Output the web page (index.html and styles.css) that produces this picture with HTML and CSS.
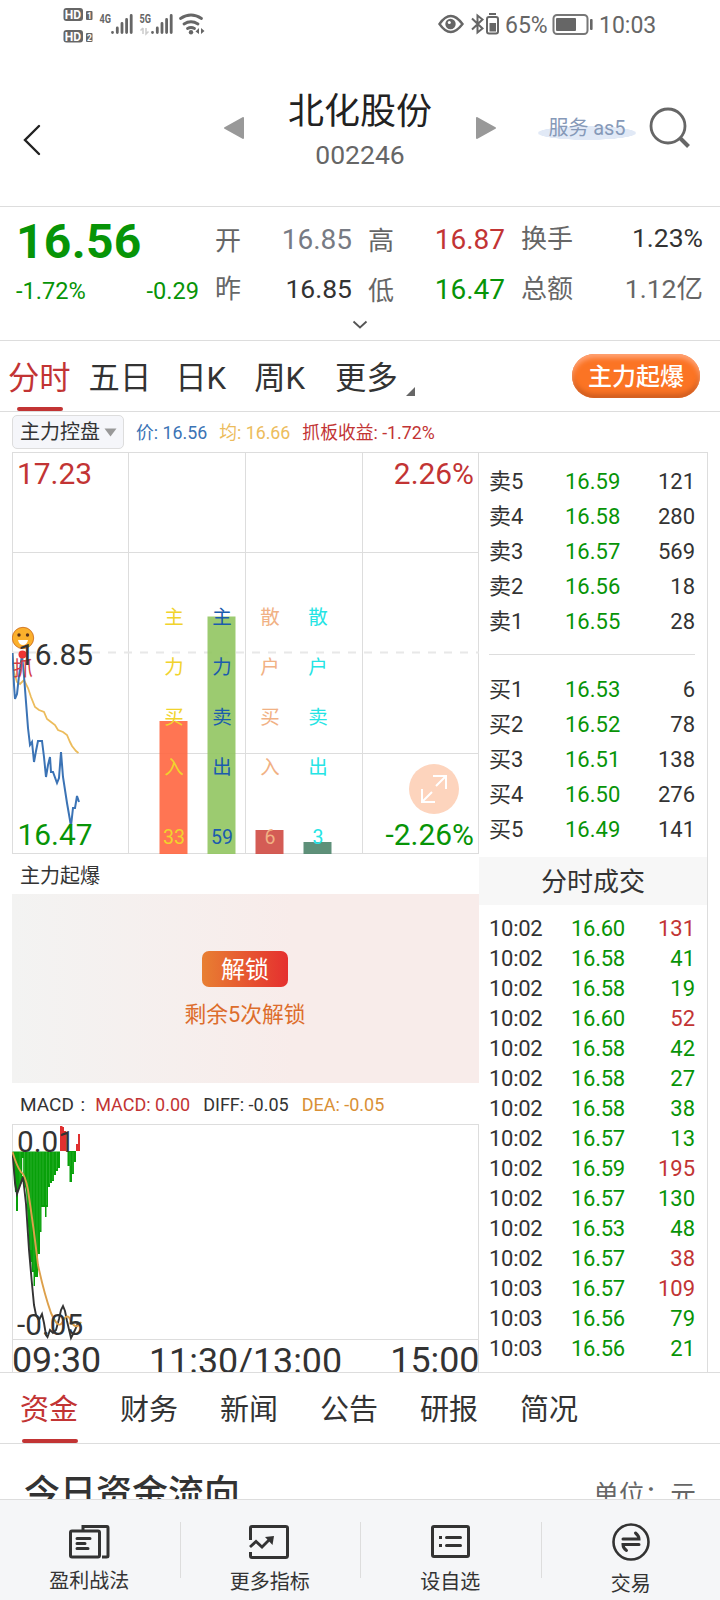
FILE: index.html
```html
<!DOCTYPE html>
<html lang="zh-CN">
<head>
<meta charset="utf-8">
<title>北化股份 002246</title>
<link rel="stylesheet" href="styles.css">
</head>
<body>
<div class="app">
  <div class="status">
    <svg class="signals" width="150" height="48" viewBox="0 0 150 48">
      <g fill="#666">
        <rect x="3.500" y="8" width="19.500" height="13" rx="3"/><rect x="26" y="11" width="6.500" height="9" rx="1"/>
        <rect x="3.500" y="30" width="19.500" height="12.500" rx="3"/><rect x="26" y="33" width="6.500" height="9" rx="1"/>
      </g>
      <g class="hd"><text x="4.800" y="18.800">HD</text><text x="4.800" y="40.500">HD</text></g>
      <g class="hd-n"><text x="27" y="18.600">1</text><text x="27" y="40.600">2</text></g>
      <g class="gen"><text x="39.500" y="23" textLength="11.500" lengthAdjust="spacingAndGlyphs">4G</text><text x="79.500" y="23" textLength="11.500" lengthAdjust="spacingAndGlyphs">5G</text></g>
      <g stroke="#666" stroke-width="2.800" stroke-linecap="round" fill="none">
        <path d="M52.500 32.500V32.300M57.300 32.500V28M62 32.500V23.500M66.600 32.500V19.500M71.200 32.500V15.500"/>
        <path d="M92.500 32.500V32.300M97.300 32.500V28M102 32.500V23.500M106.600 32.500V19.500M111.200 32.500V15.500"/>
        <path d="M120.500 18.500Q131 11.500 141.500 18.500M124 24Q131 19.500 138 24M127.500 28.500Q131 26.500 134.500 28.500"/>
      </g>
      <circle cx="131" cy="32.300" r="2.200" fill="#666"/>
      <path d="M139 28v6l-3.500-2.500zM141 28v6l3.500-3z" fill="#666"/>
      <path d="M83 28v6M80.500 30.500l2.500-2.500M86 28v6l2.500-2.500" stroke="#ccc" stroke-width="1.500" fill="none"/>
    </svg>
    <svg class="status-icons" width="64" height="48" viewBox="0 0 64 48">
      <g fill="none" stroke="#666" stroke-width="2">
        <path d="M1.500 24Q12.500 8 24.500 24Q12.500 40 1.500 24Z" stroke-width="2.400"/>
        <path d="M34 18.500l10.500 10L39.500 32.500V15.500L44.500 19.500L34 29.500"/>
        <rect x="49" y="17" width="11" height="16.500" rx="2"/>
      </g>
      <circle cx="12.500" cy="24" r="5.200" fill="#666"/><circle cx="11.300" cy="22.600" r="1.500" fill="#fff"/>
      <path d="M51 13h7v2h-7zM51.500 23h6.500v8.500h-6.500z" fill="#666"/>
    </svg>
    <span class="pct">65%</span>
    <svg class="battery" width="42" height="48" viewBox="0 0 42 48">
      <rect x="1.500" y="15" width="34" height="19" rx="3.500" fill="none" stroke="#777" stroke-width="2"/>
      <rect x="4" y="18" width="20" height="13" rx="1" fill="#666"/><rect x="38" y="19" width="2.600" height="11" rx="1" fill="#666"/>
    </svg>
    <span class="clock">10:03</span>
  </div>

  <header class="head">
    <svg class="back" width="20" height="34" viewBox="0 0 20 34"><path d="M17 3L3 17L17 31" fill="none" stroke="#222" stroke-width="2.400" stroke-linecap="round"/></svg>
    <svg class="prev" width="20" height="22" viewBox="0 0 20 22"><path d="M1 11L19 1V21Z" fill="#999" stroke="#999" stroke-linejoin="round" stroke-width="2"/></svg>
    <div class="name"><h1>北化股份</h1><span>002246</span></div>
    <svg class="next" width="20" height="22" viewBox="0 0 20 22"><path d="M19 11L1 1V21Z" fill="#999" stroke="#999" stroke-linejoin="round" stroke-width="2"/></svg>
    <div class="service">服务 as5</div>
    <svg class="search" width="44" height="44" viewBox="0 0 44 44"><circle cx="20" cy="20" r="17" fill="none" stroke="#666" stroke-width="2.800"/><path d="M32 32L40.500 40.500" stroke="#666" stroke-width="4"/></svg>
  </header>

  <section class="quote">
    <div class="last"><b>16.56</b><div class="chg"><span>-1.72%</span><span>-0.29</span></div></div>
    <dl class="q-open">
      <dt class="low">开</dt><dd class="steel">16.85</dd>
      <dt>昨</dt><dd class="small">16.85</dd>
    </dl>
    <dl class="q-high">
      <dt class="low">高</dt><dd class="red">16.87</dd>
      <dt class="low">低</dt><dd class="green">16.47</dd>
    </dl>
    <dl class="q-turn">
      <dt>换手</dt><dd class="small up">1.23%</dd>
      <dt>总额</dt><dd class="gray small">1.12亿</dd>
    </dl>
    <svg class="expand" width="16" height="10" viewBox="0 0 16 10"><path d="M1.500 1.500L8 7.500L14.500 1.500" fill="none" stroke="#555" stroke-width="1.800"/></svg>
  </section>

  <nav class="periods">
    <a class="on">分时</a><a>五日</a><a>日K</a><a>周K</a><a class="more">更多</a>
    <button class="boost">主力起爆</button>
  </nav>

  <main class="board">
    <div class="left">
      <div class="legend">
        <span class="select">主力控盘<svg width="13" height="9" viewBox="0 0 13 9"><path d="M.5 .5H12.500L6.500 8.500Z" fill="#999"/></svg></span>
        <span class="blue">价: 16.56</span><span class="amber">均: 16.66</span><span class="red">抓板收益: -1.72%</span>
      </div>
      <svg class="chart" width="467" height="402" viewBox="12 452 467 402">
        <g stroke="#ddd" stroke-width="1" fill="none">
          <path d="M12 452.500H479M12 552.500H479M12 753.500H479M12 853.500H479M12.500 452V854M128.500 452V854M245.500 452V854M362.500 452V854M478.500 452V854"/>
          <path d="M12 652.500H479" stroke="#e8e8e8" stroke-width="2" stroke-dasharray="8 8"/>
        </g>
        <g fill-opacity=".9">
          <rect x="159.500" y="721" width="28" height="133" fill="#ff6640"/>
          <rect x="207.500" y="616.500" width="28" height="237.500" fill="#91c560"/>
          <rect x="255.500" y="830" width="28" height="24" fill="#cf4a42"/>
          <rect x="303.500" y="842" width="28" height="12" fill="#4d846a"/>
        </g>
        <path d="M12.500 653L14 672L17 682L20 684L24 680L28 688L31 697L35 707L39 710L44 712L47 719L51 722L55 725L58 730L63 732L67 735L70 742L72 746L76 751L78.500 753" fill="none" stroke="#ecbc5c" stroke-width="1.800"/>
        <path d="M12.500 653L14 685L15 699L17 694L19 676L22 655L24 676L26 702L28 728L30 745L32 742L34 762L36 751L38 741H42L44 757L46 777L48 765L50 757L51 772H53L57 783L59 778L61 752L63 777L67 803L71 826L73 808H75L77 796L79 802" fill="none" stroke="#3b73b5" stroke-width="2"/>
        <circle cx="22.500" cy="654.500" r="4" fill="#e33"/>
        <text x="13" y="676" font-size="20" fill="#d43d45">抓</text>
        <circle cx="23" cy="638" r="10.700" fill="#fbb02c" stroke="#c9661a" stroke-width=".8"/>
        <g fill="#5a321a"><circle cx="19" cy="635" r="1.700"/><circle cx="27.500" cy="635" r="1.700"/></g>
        <path d="M18 640H28Q27 645 23 645Q19 645 18 640Z" fill="#fff"/>
        <g font-size="29.900">
          <text x="17" y="484" fill="#c23434">17.23</text>
          <text x="18" y="665" fill="#333">16.85</text>
          <text x="17.500" y="845" fill="#079407">16.47</text>
          <text x="474" y="484" fill="#c23434" text-anchor="end">2.26%</text>
          <text x="474" y="845" fill="#079407" text-anchor="end">-2.26%</text>
        </g>
        <g font-size="19.500" text-anchor="middle" fill="#f1d32c"><text x="174" y="624">主</text><text x="174" y="674">力</text><text x="174" y="724">买</text><text x="174" y="774">入</text><text x="174" y="844">33</text></g>
        <g font-size="19.500" text-anchor="middle" fill="#1b5cad"><text x="222" y="624">主</text><text x="222" y="674">力</text><text x="222" y="724">卖</text><text x="222" y="774">出</text><text x="222" y="844">59</text></g>
        <g font-size="19.500" text-anchor="middle" fill="#f1b184"><text x="270" y="624">散</text><text x="270" y="674">户</text><text x="270" y="724">买</text><text x="270" y="774">入</text><text x="270" y="844">6</text></g>
        <g font-size="19.500" text-anchor="middle" fill="#25e4e4"><text x="318" y="624">散</text><text x="318" y="674">户</text><text x="318" y="724">卖</text><text x="318" y="774">出</text><text x="318" y="844">3</text></g>
        <circle cx="434" cy="789" r="25" fill="#fdd4bd"/>
        <path d="M433 776H446V789M446 776L436 786M435 802H422V789M422 802L432 792" fill="none" stroke="#fff" stroke-width="2"/>
      </svg>
      <div class="sub">主力起爆</div>
      <div class="locked"><button>解锁</button><p>剩余5次解锁</p></div>
      <div class="macd-legend"><span>MACD :</span><span class="red">MACD: 0.00</span><span>DIFF: -0.05</span><span class="orange">DEA: -0.05</span></div>
      <svg class="macd" width="467" height="248" viewBox="12 1124 467 248">
        <path d="M12 1124.500H479M12 1339.500H479M12.500 1124V1372M478.500 1124V1372" fill="none" stroke="#ddd"/>
        <path d="M12.500 1151.500H60V1168H58V1171H56V1175H54V1181H52V1183H50V1187H48V1207H46.500V1217H45V1207H41.500V1232H40V1254H38V1277H35V1286H33.500V1272H31.500V1262H30L26 1190L23 1180L18 1191V1211H16V1192H15L12.500 1152Z" fill="#08a00a"/>
        <path d="M67.500 1151V1166H69.500V1182H72V1174H74V1162H76V1151Z" fill="#08a00a"/>
        <path d="M20 1152V1186M24.500 1152V1178M28 1152V1210M31 1152V1250M34 1152V1270M37 1152V1250M40 1152V1230M43 1152V1205M46.500 1152V1205M49.500 1152V1184M53 1152V1180M56.500 1152V1169M70 1152V1166M73 1152V1173" stroke="#3cb83c" stroke-width=".6"/>
        <path d="M22.700 1158V1176" stroke="#fff" stroke-width="1"/>
        <path d="M60 1126H62.500V1127H64V1131H66V1151H60ZM76 1144H78V1134H80V1151H76Z" fill="#e03030"/>
        <path d="M12.500 1152L15 1183L17 1194L23 1177L26 1204L29 1250L32 1284L34 1305L36 1315L39 1320L42 1314L44 1323L46 1335L47.500 1337L50 1330L53 1333L56 1330L59 1319L61 1310L63 1306L65 1311L67 1321L71 1338L75 1330L78 1323L80 1325" fill="none" stroke="#333" stroke-width="1.900"/>
        <path d="M12.500 1152Q17 1167 21 1172Q25 1174 28 1190Q34 1230 38 1265Q44 1293 51 1313Q58 1329 62 1323Q67 1311 71 1321Q76 1331 81 1322" fill="none" stroke="#dda04b" stroke-width="1.900"/>
        <g fill="#333" font-size="29.700">
          <text x="17" y="1151.500">0.01</text><text x="17" y="1335">-0.05</text>
        </g>
        <g fill="#333" font-size="35.800">
          <text x="12" y="1372">09:30</text><text x="149" y="1373">11:30/13:00</text><text x="479.500" y="1372" text-anchor="end">15:00</text>
        </g>
      </svg>
    </div>

    <aside class="right">
      <div class="book asks">
        <div><i>卖5</i><b>16.59</b><em>121</em></div>
        <div><i>卖4</i><b>16.58</b><em>280</em></div>
        <div><i>卖3</i><b>16.57</b><em>569</em></div>
        <div><i>卖2</i><b>16.56</b><em>18</em></div>
        <div><i>卖1</i><b>16.55</b><em>28</em></div>
      </div>
      <div class="book bids">
        <div><i>买1</i><b>16.53</b><em>6</em></div>
        <div><i>买2</i><b>16.52</b><em>78</em></div>
        <div><i>买3</i><b>16.51</b><em>138</em></div>
        <div><i>买4</i><b>16.50</b><em>276</em></div>
        <div><i>买5</i><b>16.49</b><em>141</em></div>
      </div>
      <h2>分时成交</h2>
      <div class="trades">
        <div><i>10:02</i><b>16.60</b><em class="red">131</em></div>
        <div><i>10:02</i><b>16.58</b><em>41</em></div>
        <div><i>10:02</i><b>16.58</b><em>19</em></div>
        <div><i>10:02</i><b>16.60</b><em class="red">52</em></div>
        <div><i>10:02</i><b>16.58</b><em>42</em></div>
        <div><i>10:02</i><b>16.58</b><em>27</em></div>
        <div><i>10:02</i><b>16.58</b><em>38</em></div>
        <div><i>10:02</i><b>16.57</b><em>13</em></div>
        <div><i>10:02</i><b>16.59</b><em class="red">195</em></div>
        <div><i>10:02</i><b>16.57</b><em>130</em></div>
        <div><i>10:02</i><b>16.53</b><em>48</em></div>
        <div><i>10:02</i><b>16.57</b><em class="red">38</em></div>
        <div><i>10:03</i><b>16.57</b><em class="red">109</em></div>
        <div><i>10:03</i><b>16.56</b><em>79</em></div>
        <div><i>10:03</i><b>16.56</b><em>21</em></div>
      </div>
    </aside>
  </main>

  <nav class="info"><a class="on">资金</a><a>财务</a><a>新闻</a><a>公告</a><a>研报</a><a>简况</a></nav>
  <section class="flow"><h3>今日资金流向</h3><span>单位：元</span></section>

  <footer class="dock">
    <a><svg width="42" height="38" viewBox="0 0 42 38"><g fill="none" stroke="#333" stroke-width="3"><rect x="1.500" y="8" width="29" height="26" rx="1.500"/><path d="M14 7.500V3.500H38Q39 3.500 39 5V33Q39 34 37.500 34H33"/><path d="M8 15.500H21M8 20.500H16M8 25.500H19" stroke-linecap="round"/></g></svg><span>盈利战法</span></a>
    <a><svg width="42" height="38" viewBox="0 0 42 38"><path d="M1.500 17V5Q1.500 3.500 3 3.500H36.500Q38.500 3.500 38.500 5V32.500Q38.500 34.500 36.500 34.500H3Q1.500 34.500 1.500 33V29" fill="none" stroke="#333" stroke-width="3"/><path d="M1 24L7 18.500L13 24L20 17" fill="none" stroke="#333" stroke-width="2.800"/><path d="M16 14L25 13L23.500 22Z" fill="#333"/></svg><span>更多指标</span></a>
    <a><svg width="42" height="38" viewBox="0 0 42 38"><g fill="none" stroke="#333" stroke-width="3"><rect x="2.500" y="3.500" width="36" height="30" rx="1.500"/><path d="M9 14.500h3M9 22.500h3"/><path d="M16.500 14.500H30.500M16.500 22.500H30.500" stroke-linecap="round"/></g></svg><span>设自选</span></a>
    <a><svg width="42" height="38" viewBox="0 0 42 38"><g fill="none" stroke="#333" stroke-width="3" stroke-linecap="round"><circle cx="21" cy="19" r="17.500" stroke-width="2.600"/><path d="M13 16H29Q29 13 25.500 10M29 21.500H13Q13 25 16.500 27.500" stroke-width="3"/></g></svg><span>交易</span></a>
  </footer>
</div>
</body>
</html>
```
FILE: styles.css
```css
* { box-sizing: border-box; margin: 0; padding: 0; }
body {
  font-family: Roboto, "Noto Sans CJK SC", sans-serif;
  color: #333;
  background: #fff;
}
svg { display: block; flex: none; }
a, span, i, b, em, dt, dd { white-space: nowrap; }
.app { width: 720px; height: 1600px; overflow: hidden; display: flex; flex-direction: column; }
.red, .trades .red { color: #c23434; }
.green { color: #079407; }
.gray { color: #666; }
.blue { color: #3b73b5; }
.amber { color: #ecbc5c; }
.orange { color: #d99036; }

.status { height: 50px; display: flex; padding-left: 60px; color: #666; font-size: 23px; line-height: 52px; flex: none; }
.status-icons { margin-left: 228px; }
.pct { margin-left: 3px; width: 47px; }
.clock { margin-left: 5px; }
.hd { fill: #fff; font-size: 12px; font-weight: 700; }
.hd-n { fill: #fff; font-size: 8.5px; font-weight: 700; }
.gen { fill: #666; font-size: 12.5px; font-weight: 700; }

.head { height: 157px; border-bottom: 1px solid #ddd; display: flex; align-items: flex-start; flex: none; }
.back { margin: 73px 0 0 22px; }
.prev { margin: 67px 0 0 182px; }
.name { width: 232px; padding-top: 37px; text-align: center; }
.name h1 { font-size: 36px; font-weight: 400; line-height: 50px; height: 50px; color: #222; }
.name span { display: block; font-size: 26.5px; line-height: 36px; color: #666; }
.next { margin-top: 67px; }
.service {
  margin: 63px 0 0 42px; width: 98px; height: 30px; line-height: 30px;
  text-align: center; font-size: 20px; letter-spacing: -.1px; color: #8699b8; white-space: nowrap;
  background: radial-gradient(ellipse 50px 7px at 50% 20px, #e1e9f6 96%, transparent 100%);
}
.search { margin: 56px 0 0 12px; }

.quote { position: relative; height: 134px; border-bottom: 1px solid #ddd; display: flex; flex: none; }
.last { width: 183px; margin-left: 16px; color: #079407; }
.last b { display: block; font-size: 48px; line-height: 56px; padding-top: 7px; letter-spacing: .3px; }
.chg { display: flex; justify-content: space-between; font-size: 23.6px; line-height: 28px; margin-top: 7px; }
dl { display: grid; grid-template-columns: auto auto; grid-template-rows: 50px 50px; justify-content: space-between; padding-top: 7px; line-height: 51px; height: 107px; }
dt { font-size: 26px; color: #666; }
dt.low { padding-top: 2px; }
dd { font-size: 28px; text-align: right; }
dd.small { font-size: 26.5px; line-height: 49px; }
dd.up { line-height: 48px; }
dd.steel { color: #777b84; }
.q-open { width: 137px; margin-left: 16px; }
.q-high { width: 137px; margin-left: 16px; }
.q-turn { width: 182px; margin-left: 16px; }
.expand { position: absolute; left: 352px; top: 113px; }

.periods { height: 71px; border-bottom: 1px solid #ddd; display: flex; align-items: center; font-size: 31.3px; padding-left: 8px; line-height: 70px; flex: none; }
.periods a { height: 70px; margin-right: 18px; line-height: 76px; }
.periods a:nth-child(2) { margin-right: 24px; }
.periods a:nth-child(3) { margin-right: 28px; }
.periods a:nth-child(4) { margin-right: 30px; }
.on { color: #c23434; position: relative; }
.on::after { content: ""; position: absolute; left: 9px; right: 8px; bottom: 0; height: 4px; border-radius: 2px; background: #c23434; }
.more::after { content: ""; display: inline-block; border-left: 9px solid transparent; border-bottom: 9px solid #666; margin-left: 8px; vertical-align: -7px; }
.boost {
  margin: 0 20px 0 auto; width: 128px; height: 44px; border: 0; border-radius: 22px;
  color: #fff; font: 500 24px/46px Roboto, "Noto Sans CJK SC", sans-serif;
  background: #fb7424; box-shadow: inset 0 4px 5px #ffa274, inset 0 -4px 5px #cf5c1f;
}

.board { height: 961px; display: flex; border-bottom: 1px solid #ddd; overflow: hidden; flex: none; padding-left: 12px; }
.left { width: 467px; }
.legend { height: 40px; display: flex; align-items: center; font-size: 17.8px; line-height: 24px; white-space: nowrap; }
.legend .select { display: flex; align-items: center; gap: 4px; height: 34px; width: 112px; padding-left: 7px; border: 1px solid #ddd; border-radius: 5px; background: #f5f6fa; font-size: 20px; line-height: 34px; margin-right: 12px; }
.blue, .amber { margin-right: 12px; }
.legend > span:not(.select) { padding-top: 1px; }
.sub { height: 40px; padding-left: 8px; font-size: 20px; line-height: 44px; }
.locked { height: 189px; background: linear-gradient(90deg, #f3f3f2, #f8ecea 60%); display: flex; flex-direction: column; align-items: center; padding: 57px 1px 0 0; }
.locked button { width: 86px; height: 36px; border: 0; border-radius: 7px; color: #fff; font: 24px/38px Roboto, "Noto Sans CJK SC", sans-serif; background: linear-gradient(90deg, #e87f32, #e5302f); }
.locked p { margin-top: 10px; font-size: 21.8px; line-height: 35px; color: #dd6d2c; }
.macd-legend { height: 41px; display: flex; gap: 13px; padding-left: 8px; font-size: 18px; line-height: 43px; white-space: nowrap; }
.macd-legend span:first-child { margin-right: -3px; font-size: 19px; word-spacing: 2px; }

.right { width: 229px; margin-top: 40px; border-top: 1px solid #ddd; border-right: 1px solid #ddd; }
.right i, .right b, .right em { font-style: normal; font-weight: 400; font-size: 22px; }
.right b { color: #079407; }
.right em { text-align: right; }
.book { margin: 0 12px 0 10px; height: 202px; }
.asks { padding-top: 11px; border-bottom: 1px solid #ddd; }
.book div { display: grid; grid-template-columns: 76px 70px 1fr; height: 35px; line-height: 35px; }
.bids { padding-top: 17px; }
.right h2 { font-size: 26px; font-weight: 400; line-height: 50px; height: 48px; text-align: center; background: #f7f7f7; }
.trades { padding: 9px 12px 0 10px; }
.trades i, .trades b { letter-spacing: -.3px; }
.trades div { display: grid; grid-template-columns: 82px 70px 1fr; height: 30px; line-height: 30px; }
.trades em { color: #079407; }

.info { height: 71px; display: flex; gap: 42px; padding-left: 20px; border-bottom: 1px solid #ddd; font-size: 29px; line-height: 74px; flex: none; }
.info a { height: 70px; }
.info .on::after { left: 2px; right: 0; }
.flow { height: 55px; overflow: hidden; display: flex; justify-content: space-between; padding: 22px 24px 0; flex: none; }
.flow h3 { font-size: 36px; font-weight: 500; line-height: 57px; }
.flow span { font-size: 25.7px; line-height: 59px; color: #666; }
.dock { height: 101px; display: flex; background: #f5f6f8; border-top: 1px solid #ddd; flex: none; }
.dock a { flex: 1; display: flex; flex-direction: column; align-items: center; padding: 22px 2px 0 0; font-size: 20px; line-height: 28px; background: linear-gradient(#ddd, #ddd) right 22px / 1px 56px no-repeat; }
.dock a:last-child { background: none; padding-right: 0; }
.dock svg { margin-left: 1px; margin-top: 1px; }
.dock span { margin-top: 6px; }
.dock a:nth-child(n+2) span { margin-top: 7px; }
.dock a:last-child span { margin-top: 9px; }
```
